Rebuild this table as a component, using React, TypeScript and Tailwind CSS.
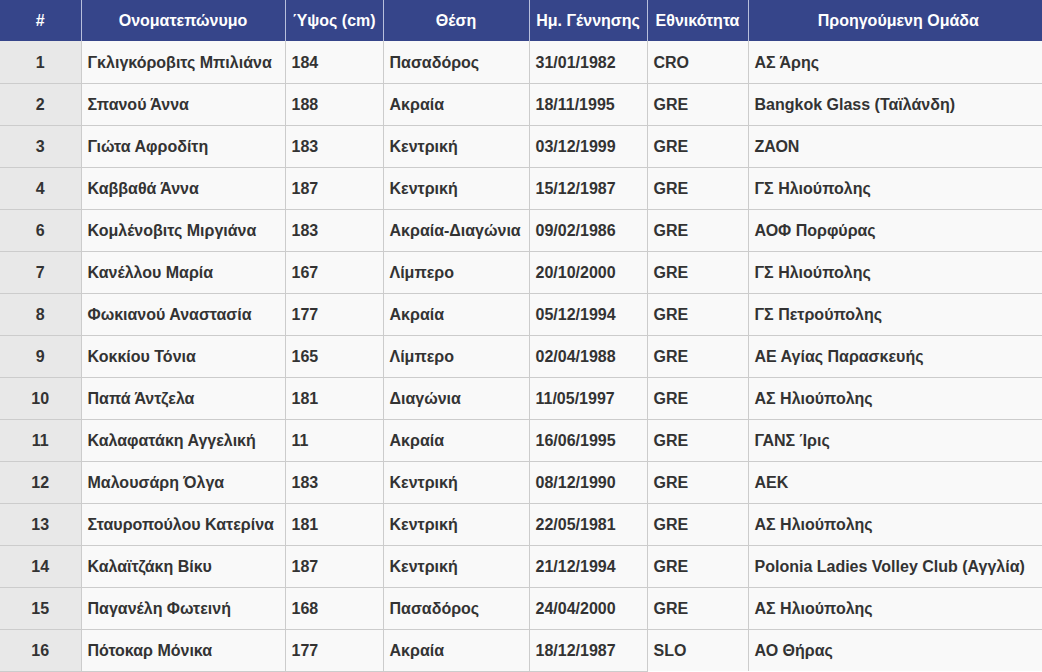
type Player = {
  num: number;
  name: string;
  height: number;
  position: string;
  born: string;
  nat: string;
  team: string;
};

const players: Player[] = [
  { num: 1, name: "Γκλιγκόροβιτς Μπιλιάνα", height: 184, position: "Πασαδόρος", born: "31/01/1982", nat: "CRO", team: "ΑΣ Άρης" },
  { num: 2, name: "Σπανού Άννα", height: 188, position: "Ακραία", born: "18/11/1995", nat: "GRE", team: "Bangkok Glass (Ταϊλάνδη)" },
  { num: 3, name: "Γιώτα Αφροδίτη", height: 183, position: "Κεντρική", born: "03/12/1999", nat: "GRE", team: "ΖΑΟΝ" },
  { num: 4, name: "Καββαθά Άννα", height: 187, position: "Κεντρική", born: "15/12/1987", nat: "GRE", team: "ΓΣ Ηλιούπολης" },
  { num: 6, name: "Κομλένοβιτς Μιργιάνα", height: 183, position: "Ακραία-Διαγώνια", born: "09/02/1986", nat: "GRE", team: "ΑΟΦ Πορφύρας" },
  { num: 7, name: "Κανέλλου Μαρία", height: 167, position: "Λίμπερο", born: "20/10/2000", nat: "GRE", team: "ΓΣ Ηλιούπολης" },
  { num: 8, name: "Φωκιανού Αναστασία", height: 177, position: "Ακραία", born: "05/12/1994", nat: "GRE", team: "ΓΣ Πετρούπολης" },
  { num: 9, name: "Κοκκίου Τόνια", height: 165, position: "Λίμπερο", born: "02/04/1988", nat: "GRE", team: "ΑΕ Αγίας Παρασκευής" },
  { num: 10, name: "Παπά Άντζελα", height: 181, position: "Διαγώνια", born: "11/05/1997", nat: "GRE", team: "ΑΣ Ηλιούπολης" },
  { num: 11, name: "Καλαφατάκη Αγγελική", height: 11, position: "Ακραία", born: "16/06/1995", nat: "GRE", team: "ΓΑΝΣ Ίρις" },
  { num: 12, name: "Μαλουσάρη Όλγα", height: 183, position: "Κεντρική", born: "08/12/1990", nat: "GRE", team: "ΑΕΚ" },
  { num: 13, name: "Σταυροπούλου Κατερίνα", height: 181, position: "Κεντρική", born: "22/05/1981", nat: "GRE", team: "ΑΣ Ηλιούπολης" },
  { num: 14, name: "Καλαϊτζάκη Βίκυ", height: 187, position: "Κεντρική", born: "21/12/1994", nat: "GRE", team: "Polonia Ladies Volley Club (Αγγλία)" },
  { num: 15, name: "Παγανέλη Φωτεινή", height: 168, position: "Πασαδόρος", born: "24/04/2000", nat: "GRE", team: "ΑΣ Ηλιούπολης" },
  { num: 16, name: "Πότοκαρ Μόνικα", height: 177, position: "Ακραία", born: "18/12/1987", nat: "SLO", team: "ΑΟ Θήρας" },
];

const headers = ["#", "Ονοματεπώνυμο", "Ύψος (cm)", "Θέση", "Ημ. Γέννησης", "Εθνικότητα", "Προηγούμενη Ομάδα"];
const widths = ["w-[81px]", "w-[204px]", "w-[98px]", "w-[146px]", "w-[118px]", "w-[101px]", "w-[300px]"];

export default function App() {
  return (
    <div className="w-[1042px] h-[672px] overflow-hidden bg-white font-['Liberation_Sans',Arial,sans-serif] text-[16px] font-bold">
      <table className="table-fixed border-collapse w-[1048px]">
        <colgroup>
          {widths.map((w, i) => (
            <col key={i} className={w} />
          ))}
        </colgroup>
        <thead>
          <tr className="bg-[#36458a] text-white h-[41px]">
            {headers.map((h, i) => (
              <th
                key={h}
                className={`text-center font-bold whitespace-nowrap px-0 ${i > 0 ? "border-l border-[#b8bfdc]" : ""}`}
              >
                {h}
              </th>
            ))}
          </tr>
        </thead>
        <tbody className="text-[#333333]">
          {players.map((p, r) => {
            const last = r === players.length - 1;
            const cell = "border-l border-[#cccccc] px-[6px] pt-[2px] text-left whitespace-nowrap";
            const bottom = last ? "border-b border-b-[#cccccc]" : "";
            return (
              <tr key={p.num} className={`h-[42px] bg-[#f9f9f9] ${last ? "" : "border-b border-[#cccccc]"}`}>
                <td className={`bg-[#e8e8e8] text-center pt-[2px] ${bottom}`}>{p.num}</td>
                <td className={`${cell} ${bottom}`}>{p.name}</td>
                <td className={`${cell} ${bottom}`}>{p.height}</td>
                <td className={`${cell} ${bottom}`}>{p.position}</td>
                <td className={`${cell} ${bottom}`}>{p.born}</td>
                <td className={cell}>{p.nat}</td>
                <td className={cell}>{p.team}</td>
              </tr>
            );
          })}
        </tbody>
      </table>
    </div>
  );
}
